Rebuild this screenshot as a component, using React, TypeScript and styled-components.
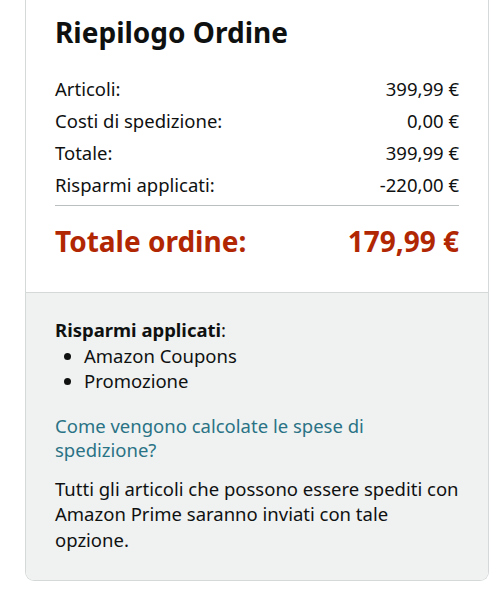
import React from "react";
import styled, { createGlobalStyle } from "styled-components";

const Global = createGlobalStyle`
  html, body { margin: 0; padding: 0; background: #ffffff; }
  body { font-family: "Noto Sans", "Open Sans", Arial, sans-serif; color: #0F1111; }
`;

const Card = styled.div`
  margin: 0 0 0 25px;
  width: 464px;
  box-sizing: border-box;
  border: 1px solid #D5D9D9;
  border-top: none;
  border-radius: 0 0 9px 9px;
  overflow: hidden;
`;

const Top = styled.div`
  padding: 12px 29px 0 29px;
  height: 292px;
  box-sizing: border-box;
`;

const Heading = styled.h2`
  margin: 0;
  font-size: 28px;
  font-weight: 700;
  line-height: 40px;
  color: #0F1111;
`;

const Rows = styled.div`
  margin-top: 24px;
  display: flex;
  flex-direction: column;
  gap: 7px;
  padding-bottom: 8px;
  border-bottom: 1px solid #BBBFBF;
`;

const Row = styled.div`
  display: flex;
  justify-content: space-between;
  font-size: 18.5px;
  line-height: 25px;
`;

const TotalRow = styled.div`
  display: flex;
  justify-content: space-between;
  margin-top: 17px;
  font-size: 28px;
  font-weight: 700;
  line-height: 36px;
  color: #B12704;
`;

const Bottom = styled.div`
  background: #F0F2F2;
  border-top: 1px solid #D5D9D9;
  padding: 24px 29px 28px 29px;
  font-size: 18.5px;
  line-height: 25.5px;
`;

const Label = styled.div`
  font-weight: 700;
  & > span { font-weight: 400; }
`;

const List = styled.ul`
  margin: 0;
  padding: 0 0 0 29px;
`;

const Item = styled.li`
  padding-left: 0;
`;

const Link = styled.a`
  display: block;
  margin-top: 20px;
  line-height: 24px;
  color: #2A7385;
  text-decoration: none;
`;

const Note = styled.p`
  margin: 14px 0 0 0;
`;

const rows: [string, string][] = [
  ["Articoli:", "399,99 €"],
  ["Costi di spedizione:", "0,00 €"],
  ["Totale:", "399,99 €"],
  ["Risparmi applicati:", "-220,00 €"],
];

export default function App() {
  return (
    <>
      <Global />
      <Card>
        <Top>
          <Heading>Riepilogo Ordine</Heading>
          <Rows>
            {rows.map(([l, v]) => (
              <Row key={l}>
                <span>{l}</span>
                <span>{v}</span>
              </Row>
            ))}
          </Rows>
          <TotalRow>
            <span>Totale ordine:</span>
            <span>179,99 €</span>
          </TotalRow>
        </Top>
        <Bottom>
          <Label>
            Risparmi applicati<span>:</span>
          </Label>
          <List>
            <Item>Amazon Coupons</Item>
            <Item>Promozione</Item>
          </List>
          <Link href="#">Come vengono calcolate le spese di spedizione?</Link>
          <Note>
            Tutti gli articoli che possono essere spediti con Amazon Prime saranno inviati con tale opzione.
          </Note>
        </Bottom>
      </Card>
    </>
  );
}
